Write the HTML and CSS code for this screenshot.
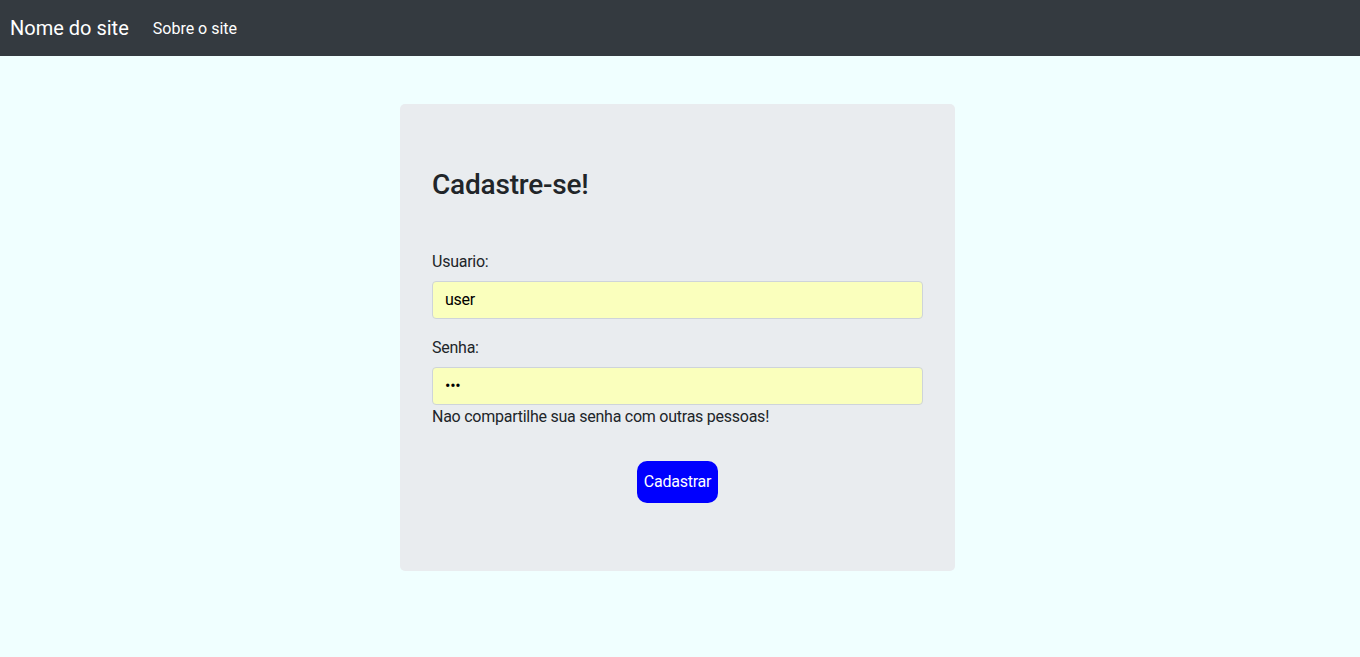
FILE: index.html
```html
<!DOCTYPE html>
<html lang="pt-BR">
<head>
<meta charset="utf-8">
<title>Cadastro</title>
<link rel="stylesheet" href="styles.css">
</head>
<body>
<nav class="navbar">
  <a class="brand" href="#">Nome do site</a>
  <a class="nav-link" href="#">Sobre o site</a>
</nav>
<main class="page">
  <section class="jumbotron">
    <h3 class="title">Cadastre-se!</h3>
    <form class="form">
      <div class="form-group">
        <label class="label" for="user">Usuario:</label>
        <input class="form-control" id="user" type="text" value="user">
      </div>
      <div class="form-group last">
        <label class="label" for="pass">Senha:</label>
        <input class="form-control" id="pass" type="password" value="123">
        <div class="help">Nao compartilhe sua senha com outras pessoas!</div>
      </div>
      <div class="actions">
        <button class="btn" type="button">Cadastrar</button>
      </div>
    </form>
  </section>
</main>
</body>
</html>
```
FILE: styles.css
```css
* { box-sizing: border-box; }
html, body { margin: 0; padding: 0; }
body {
  font-family: Roboto, "Liberation Sans", sans-serif;
  font-size: 16px;
  line-height: 1.5;
  letter-spacing: -0.25px;
  color: #212529;
  background: #f0ffff;
  min-height: 657px;
}
.navbar {
  background: #343a40;
  height: 56px;
  display: flex;
  align-items: center;
  padding: 0 10px;
  letter-spacing: 0;
}
.brand {
  color: #fff;
  text-decoration: none;
  font-size: 20px;
  line-height: 30px;
  margin-right: 16px;
}
.nav-link {
  color: #fff;
  text-decoration: none;
  padding: 9px 8px 7px;
}
.page {
  display: flex;
  justify-content: center;
  padding-top: 48px;
  padding-right: 5px;
}
.jumbotron {
  width: 555px;
  background: #e9ecef;
  border-radius: 5px;
  padding: 64px 32px 68px;
}
.title {
  margin: 0 0 48px;
  font-size: 28px;
  font-weight: 500;
  line-height: 1.2;
  letter-spacing: -0.2px;
}
.form { margin: 0; }
.form-group { margin-bottom: 17px; }
.form-group.last { margin-bottom: 32px; }
.label {
  display: block;
  margin-bottom: 7px;
}
.form-control {
  display: block;
  width: 100%;
  height: 38px;
  padding: 6px 12px;
  font: inherit;
  letter-spacing: inherit;
  color: #000;
  background: #faffbd;
  border: 1px solid #ced4da;
  border-radius: 4px;
}
.help { color: #212529; }
.actions {
  display: flex;
  justify-content: center;
}
.btn {
  font: inherit;
  letter-spacing: inherit;
  color: #fff;
  background: #0000ff;
  border: none;
  border-radius: 10px;
  height: 42px;
  padding: 1px 7px 0;
  cursor: pointer;
}
```
